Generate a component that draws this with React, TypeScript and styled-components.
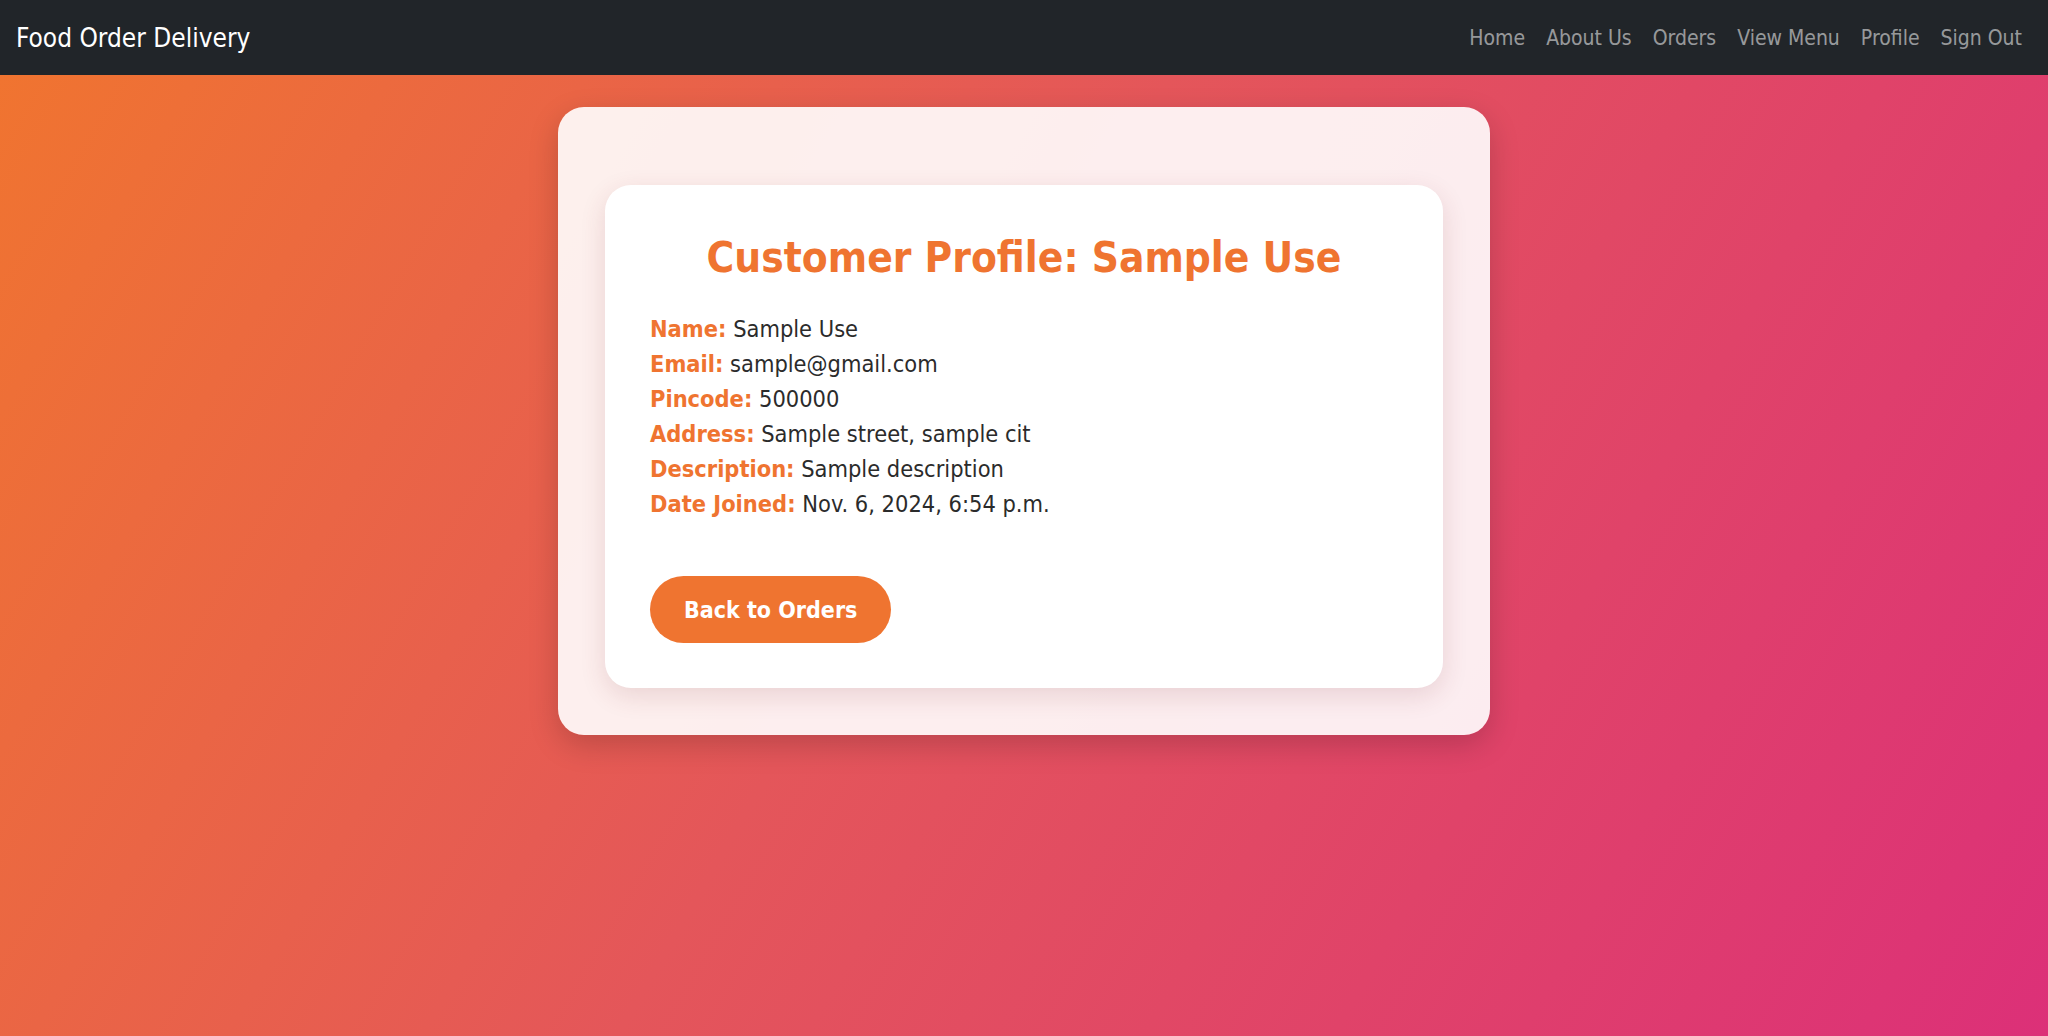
import React from 'react'
import styled, { createGlobalStyle } from 'styled-components'

const GlobalStyle = createGlobalStyle`
  html, body {
    margin: 0;
    padding: 0;
  }
  body {
    font-family: "DejaVu Sans", Tahoma, Verdana, sans-serif;
    font-stretch: condensed;
    color: #212529;
  }
  * {
    box-sizing: border-box;
  }
`

const details = [
  { label: 'Name:', value: 'Sample Use' },
  { label: 'Email:', value: 'sample@gmail.com' },
  { label: 'Pincode:', value: '500000' },
  { label: 'Address:', value: 'Sample street, sample cit' },
  { label: 'Description:', value: 'Sample description' },
  { label: 'Date Joined:', value: 'Nov. 6, 2024, 6:54 p.m.' }
]

const links = ['Home', 'About Us', 'Orders', 'View Menu', 'Profile', 'Sign Out']

const App = () => {
  return (
    <>
      <GlobalStyle />
      <Nav.Bar>
        <Nav.Brand href="#">Food Order Delivery</Nav.Brand>
        <Nav.Links>
          {links.map((link) => (
            <Nav.Link key={link} href="#">
              {link}
            </Nav.Link>
          ))}
        </Nav.Links>
      </Nav.Bar>
      <Page.Main>
        <Page.Outer>
          <Page.Card>
            <Page.Title>Customer Profile: Sample Use</Page.Title>
            {details.map((item) => (
              <Page.Row key={item.label}>
                <Page.Label>{item.label}</Page.Label> {item.value}
              </Page.Row>
            ))}
            <Page.Button href="#">Back to Orders</Page.Button>
          </Page.Card>
        </Page.Outer>
      </Page.Main>
    </>
  )
}

export default App

const Nav = {
  Bar: styled.nav`
    height: 75px;
    background: #212529;
    display: flex;
    align-items: center;
    justify-content: space-between;
    padding: 0 16px;
  `,
  Brand: styled.a`
    color: #fff;
    font-size: 26px;
    text-decoration: none;
    line-height: 1.5;
    margin-top: 2px;
  `,
  Links: styled.div`
    display: flex;
    align-items: center;
    margin-top: 2px;
  `,
  Link: styled.a`
    color: rgba(255, 255, 255, 0.55);
    font-size: 21px;
    padding: 0 10.5px;
    text-decoration: none;
    line-height: 1.5;
    &:last-child {
      padding-right: 10px;
    }
  `
}

const Page = {
  Main: styled.main`
    min-height: calc(100vh - 75px);
    background: linear-gradient(120deg, #f07430 0%, #e4565a 45%, #dc3078 100%);
    padding-top: 32px;
    overflow: hidden;
  `,
  Outer: styled.div`
    width: 932px;
    margin: 0 auto;
    padding: 78px 47px 47px;
    border-radius: 26px;
    background: rgba(255, 255, 255, 0.9);
    box-shadow: 0 10px 30px rgba(0, 0, 0, 0.18);
  `,
  Card: styled.div`
    background: #fff;
    border-radius: 26px;
    padding: 48px 45px 45px;
    box-shadow: 0 8px 26px rgba(120, 40, 50, 0.14);
  `,
  Title: styled.h2`
    margin: 0 0 29px;
    text-align: center;
    color: #ef7430;
    font-size: 42px;
    font-weight: 700;
    line-height: 50px;
  `,
  Row: styled.p`
    margin: 0;
    font-size: 23.4px;
    line-height: 35px;
    color: #2b2b2b;
  `,
  Label: styled.strong`
    color: #ef7430;
    font-weight: 700;
  `,
  Button: styled.a`
    display: inline-block;
    margin-top: 54px;
    padding: 15.5px 34px;
    border-radius: 34px;
    background: #ef7430;
    color: #fff;
    font-size: 23px;
    font-weight: 700;
    line-height: 36px;
    text-decoration: none;
  `
}
